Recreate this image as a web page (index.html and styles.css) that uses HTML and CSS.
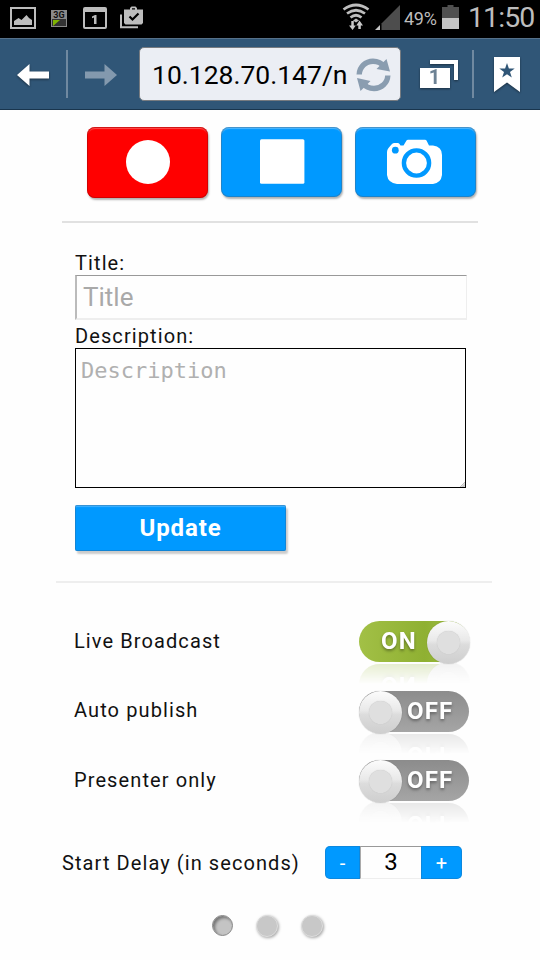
FILE: index.html
```html
<!DOCTYPE html>
<html lang="en">
<head>
<meta charset="utf-8">
<title>Broadcast control</title>
<link rel="stylesheet" href="styles.css">
</head>
<body>
<div class="status">
  <svg class="s-picture" width="26" height="22" viewBox="0 0 26 22"><path d="M1 1h24v20H1z" fill="none" stroke="#bdbdbd" stroke-width="2"/><path d="M4 18v-4l4.500-3 3 2 5-5 2.500 3 3 2v5z" fill="#bdbdbd"/></svg>
  <svg class="s-3g" width="16" height="17" viewBox="0 0 16 17"><path d="M0 0h16v17H0z" fill="#8a8a8a"/><path d="M1 9h14v7H1z" fill="#333"/><path d="M2 10h7l-7 6z" fill="#7fb400"/><text x="8" y="8" text-anchor="middle" class="tiny-3g">3G</text></svg>
  <svg class="s-calendar" width="24" height="22" viewBox="0 0 24 22"><rect x="1" y="1" width="22" height="20" rx="1" fill="none" stroke="#bdbdbd" stroke-width="2"/><path d="M1 1h22v4H1z" fill="#bdbdbd"/><path d="M9 9.500 12 8h1.500v9H11v-6.500l-2 .7z" fill="#bdbdbd"/></svg>
  <svg class="s-bag" width="23" height="23" viewBox="0 0 23 23"><path d="M1 8.500v12.800h17" fill="none" stroke="#bdbdbd" stroke-width="2"/><path d="M4 3.500h6V2l1.500-1.500h4L17 2v1.500h6V17l-1.500 1.500H5.500L4 17zm8-1.200v1.200h3V2.300z" fill="#bdbdbd" fill-rule="evenodd"/><path d="m9.500 10.500 3 3 6-6" fill="none" stroke="#000" stroke-width="2.200"/></svg>
  <svg class="s-wifi" width="28" height="28" viewBox="0 0 28 28"><g fill="none" stroke="#bdbdbd" stroke-width="2.700"><path d="M1.500 6.500q12.500-9 25 0M5 10.500q9-6.500 18 0M8.500 14.500q5.500-4.500 11 0"/></g><path d="m11 17.500 3-2 3 2-3 2z" fill="#bdbdbd"/><path d="M9.300 18h2.500v4.500h2L10.600 27 7 22.500h2.300zM16.300 26h2.500v-3.500h2.200L17.500 17.500 14.300 22.500h2z" fill="#c9c9c9"/></svg>
  <svg class="s-signal" width="25" height="25" viewBox="0 0 25 25"><path d="M25 0v25H6.500V18.500z" fill="#4d4d4d"/><path d="M5 20v5H0z" fill="#c5c5c5"/></svg>
  <span class="percent">49%</span>
  <svg class="s-battery" width="17" height="24" viewBox="0 0 17 24"><path d="M0 2h5.500V0h6v2H17v11H0z" fill="#505050"/><path d="M0 13h17v11H0z" fill="#c4c4c4"/></svg>
  <span class="clock">11:50</span>
</div>
<div class="toolbar">
  <svg class="arrow back" width="33" height="23" viewBox="0 0 33 23"><path d="m0 11 12.500-11v7.500H32v7H12.500V22z" fill="#fff"/></svg>
  <i class="sep"></i>
  <svg class="arrow forward" width="33" height="23" viewBox="0 0 33 23"><path d="M32 11 19.500 0v7.500H0v7h19.500V22z" fill="#8399ae"/></svg>
  <div class="address"><span class="url">10.128.70.147/n</span>
    <svg width="36" height="34" viewBox="0 0 36 34"><g fill="none" stroke="#8a9db0" stroke-width="5.400"><path d="M3.200 16.500C3.500 9 9.500 3.200 17 3.200c5 0 8.700 2 11.300 5.500M31.800 17.500C31.500 25 25.500 30.500 18 30.500c-5 0-8.700-2-11.300-5.300"/></g><path d="M30.500 1 34 13.500 20.500 11zM4.500 33 1 20l13.500 3z" fill="#8a9db0"/></svg>
  </div>
  <svg class="tabs" width="40" height="31" viewBox="0 0 40 31"><path d="M10 0h28v20h-4V4H10z" fill="#fff"/><path d="M0 8h30v20H0z" fill="#fff"/><text x="14.500" y="24" text-anchor="middle" class="tab-count">1</text></svg>
  <i class="sep"></i>
  <svg class="bookmark" width="27" height="36" viewBox="0 0 27 36"><path d="M0 0h26v35L13 25.500 0 35z" fill="#fff"/><path d="m13 6 1.900 5.500h5.800L16 15l1.800 5.600L13 17.200l-4.800 3.400L10 15l-4.700-3.500h5.800z" fill="#305677"/></svg>
</div>
<main class="page">
  <div class="capture">
    <button class="cap record"><svg width="46" height="46" viewBox="0 0 46 46"><circle cx="23" cy="22" r="22" fill="#fff"/></svg></button>
    <button class="cap"><svg width="46" height="46" viewBox="0 0 46 46"><rect x="1" y=".3" width="44.400" height="44.400" rx="1.500" fill="#fff"/></svg></button>
    <button class="cap"><svg class="camera" width="56" height="46" viewBox="0 0 56 46"><path d="M1 13q0-2 1.500-4L5.500 5.500Q6.500 4 8 4h3.500q1.500 0 2 1l1 1.500h3L20.500 1.500Q21 .8 22 .8h17q1 0 1.500.7l2.500 5h4q9 1 9 9.500v20q-1 8-9 9H11q-9-1-10-9z" fill="#fff"/><circle cx="9.300" cy="11.200" r="3.400" fill="#09f"/><circle cx="30.500" cy="24" r="12.600" fill="none" stroke="#09f" stroke-width="4.400"/></svg></button>
  </div>
  <hr class="rule top">
  <form class="details">
    <label class="label">Title:</label>
    <div class="field"><span class="ph">Title</span></div>
    <label class="label second">Description:</label>
    <div class="area"><span class="ph-mono">Description</span><svg class="grip" width="5" height="5" viewBox="0 0 6 6"><path d="M6 0v6H0z" fill="#ddd"/><path d="m0 6 6-6M3 6l3-3" stroke="#aaa" stroke-width=".8"/></svg></div>
    <button type="button" class="update"><span>Update</span></button>
  </form>
  <hr class="rule mid">
  <div class="option"><span class="name">Live Broadcast</span><div class="switch on"><div class="track"><b>ON</b></div><i class="knob"></i></div></div>
  <div class="option"><span class="name auto">Auto publish</span><div class="switch"><div class="track"><b>OFF</b></div><i class="knob"></i></div></div>
  <div class="option"><span class="name">Presenter only</span><div class="switch"><div class="track"><b>OFF</b></div><i class="knob"></i></div></div>
  <div class="delay">
    <span class="name delay-name">Start Delay (in seconds)</span>
    <div class="stepper"><button class="minus">-</button><span class="value">3</span><button class="plus">+</button></div>
  </div>
  <div class="dots"><i class="dot active"></i><i class="dot"></i><i class="dot"></i></div>
</main>
</body>
</html>
```
FILE: styles.css
```css
* { box-sizing: border-box; }
body {
  margin: 0;
  width: 540px;
  height: 960px;
  overflow: hidden;
  background: #fefefe;
  color: #111;
  font-family: Roboto, "Noto Sans", sans-serif;
}
button { border: 0; padding: 0; font-family: inherit; color: #fff; }
svg { display: block; flex: none; }

/* status bar */
.status { display: flex; height: 38px; background: #000; color: #bdbdbd; align-items: flex-start; white-space: nowrap; }
.s-picture { margin: 7px 0 0 10px; }
.s-3g { margin: 10px 0 0 15px; }
.tiny-3g { font: bold 9px Roboto, sans-serif; fill: #111; }
.s-calendar { margin: 7px 0 0 16px; }
.s-bag { margin: 6px 0 0 13px; }
.s-wifi { margin: 3px 0 0 199px; }
.s-signal { margin: 5px 0 0 5px; }
.percent { width: 34px; margin: 7px 0 0 4px; font-size: 18px; line-height: 24px; letter-spacing: -.3px; }
.s-battery { margin: 5px 0 0 4px; }
.clock { margin: 1px 0 0 9px; font-size: 28.5px; line-height: 34px; letter-spacing: -.9px; }

/* browser toolbar */
.toolbar {
  display: flex;
  align-items: flex-start;
  height: 72px;
  background: #305677;
  border-top: 1px solid #56718a;
  border-bottom: 1px solid #19354d;
}
.back, .tabs, .bookmark { filter: drop-shadow(0 1px 1px rgba(0, 0, 0, .45)); }
.back { margin: 25px 0 0 17px; }
.forward { margin: 25px 0 0 17px; }
.sep { width: 2px; height: 48px; margin: 11px 0 0 16px; background: #7089a0; flex: none; }
.address {
  display: flex;
  width: 262px;
  height: 54px;
  margin: 8px 0 0 21px;
  padding: 10px 8px 0 12px;
  justify-content: space-between;
  border: 1px solid #777b80;
  border-radius: 5px;
  background: #ebeef4;
  color: #000;
}
.url { width: 197px; white-space: nowrap; font-size: 26.5px; line-height: 33px; }
.tabs { margin: 21px 0 0 19px; }
.tabs + .sep { margin-left: 12px; }
.tab-count { font: bold 20px Roboto, sans-serif; fill: #6d8294; }
.bookmark { margin: 18px 0 0 20px; }

/* capture buttons */
.capture { display: flex; height: 72px; margin: 17px 0 0 87px; gap: 13px; }
.cap {
  display: flex;
  justify-content: center;
  align-items: center;
  width: 121px;
  height: 70px;
  border-radius: 8px;
  background: #09f;
  box-shadow: inset 0 0 0 1px rgba(60, 105, 140, .45), inset 0 2px 1px rgba(255, 255, 255, .3), 1px 2px 2px rgba(0, 0, 0, .3);
}
.record { height: 71px; background: red; box-shadow: inset 0 0 0 1px rgba(190, 0, 0, .7), inset 0 2px 1px rgba(255, 255, 255, .3), 1px 2px 2px rgba(0, 0, 0, .3); }
.camera { margin-right: 3px; }

.rule { height: 2px; border: 0; }
.top { width: 416px; margin: 22px 0 0 62px; background: #e1e1e1; }
.mid { width: 436px; margin: 30px 0 0 56px; background: #eee; }

/* details */
.details { display: flex; flex-direction: column; align-items: flex-start; margin: 28px 0 0 75px; }
.label, .name { font-size: 20px; line-height: 24px; letter-spacing: 1.1px; white-space: nowrap; }
.field { width: 392px; height: 45px; padding: 6px; border: solid; border-width: 1px 1px 2px 2px; border-color: #999 #eee #eee #bbb; }
.ph { font-size: 26px; line-height: 30px; color: #a9a9a9; }
.second { margin-top: 4px; }
.area { display: flex; position: relative; width: 391px; height: 140px; padding: 9px 5px; border: 1px solid #000; }
.ph-mono { font: 22px/26px "DejaVu Sans Mono", monospace; color: #b0b0b0; }
.grip { position: absolute; right: 0; bottom: 0; }
.update {
  width: 211px;
  height: 46px;
  margin-top: 17px;
  border-radius: 2px;
  background: #09f;
  box-shadow: inset 0 0 0 1px rgba(40, 100, 150, .4), inset 0 2px 1px rgba(255, 255, 255, .25), 2px 3px 2px rgba(0, 0, 0, .2);
  font-size: 24px;
  font-weight: 700;
  letter-spacing: .9px;
}

/* switches */
.option { display: flex; justify-content: space-between; height: 44px; margin: 0 70px 25.500px 74px; }
.mid + .option { margin-top: 37px; }
.name { margin-top: 9px; }
.auto { margin-top: 8px; }
.switch { position: relative; width: 111px; height: 44px; -webkit-box-reflect: below -2px linear-gradient(transparent 50%, rgba(255, 255, 255, .26)); }
.track {
  display: flex;
  width: 110px;
  height: 41px;
  margin-top: 1px;
  padding-left: 48px;
  border-radius: 21px;
  background: linear-gradient(#8c8c8c, #a5a5a5);
  color: #fff;
  font-size: 24px;
  line-height: 41px;
  letter-spacing: 1.1px;
  text-shadow: 0 2px 3px rgba(0, 0, 0, .35);
}
.on .track { padding-left: 22px; background: linear-gradient(90deg, #a2c046, #8fb032 60%, #a2c046); }
.knob {
  position: absolute;
  left: 0;
  top: 1px;
  width: 43px;
  height: 43px;
  border-radius: 50%;
  background: linear-gradient(#fcfcfc, #e9e9e9 45%, #dcdcdc 55%, #cecece);
  box-shadow: 0 0 1px rgba(0, 0, 0, .3);
}
.knob::after { content: ""; position: absolute; inset: 10px; border-radius: 50%; background: #dfdfdf; box-shadow: 0 0 1px #bbb; }
.on .knob { left: 68px; }

/* delay stepper */
.delay { display: flex; height: 34px; margin: 42px 78px 0 62px; justify-content: space-between; }
.delay-name { margin-top: 6px; letter-spacing: 1.08px; }
.stepper { display: flex; width: 137px; height: 33px; margin-top: 1px; }
.stepper button { flex: none; background: #09f; font-size: 20px; box-shadow: inset 0 0 0 1px rgba(40, 100, 150, .3); }
.stepper .minus { width: 35px; border-radius: 5px 0 0 5px; }
.stepper .plus { width: 41px; border-radius: 0 5px 5px 0; }
.value { width: 61px; border: solid; border-width: 1px 0 1px 1px; border-color: #999 #eee #eee #aaa; text-align: center; font-size: 24px; line-height: 30px; color: #000; }

.dots { display: flex; gap: 23px; margin: 36px 0 0 212px; }
.dot { width: 22px; height: 22px; border: 1px solid #ddd; border-radius: 50%; background: #c8c8c8; box-shadow: 1px 1px 3px rgba(0, 0, 0, .35); }
.active { width: 21px; height: 21px; border-color: #888; background: #c4c4c4; box-shadow: inset 2px 2px 3px rgba(0, 0, 0, .4); }
```
